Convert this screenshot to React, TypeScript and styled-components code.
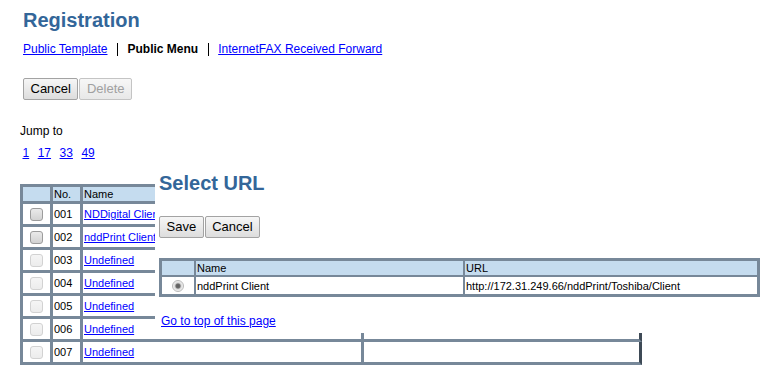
import * as React from 'react';
import styled, { createGlobalStyle } from 'styled-components';

const GlobalStyle = createGlobalStyle`
  html, body {
    margin: 0;
    padding: 0;
    background: #ffffff;
    font-family: "Liberation Sans", Arial, sans-serif;
    font-size: 12px;
    color: #000000;
  }
`;

const Page = styled.div`
  position: relative;
  width: 761px;
  height: 365px;
  overflow: hidden;
  padding: 8px 0 0 20px;
  box-sizing: border-box;
`;

const Title = styled.h1<{ $indent?: number }>`
  margin: 0 0 0 ${(p) => p.$indent ?? 0}px;
  font-size: 20px;
  line-height: 24px;
  font-weight: bold;
  color: #336699;
`;

const TabBar = styled.div`
  display: flex;
  align-items: center;
  margin: 10px 0 0 3px;
  line-height: 14px;
`;

const TabLink = styled.a`
  color: #0000ff;
  text-decoration: underline;
  cursor: pointer;
`;

const TabCurrent = styled.span`
  font-weight: bold;
`;

const TabSep = styled.span`
  display: inline-block;
  width: 0;
  height: 13px;
  border-left: 1px solid #000000;
  margin: 0 9.5px;
`;

const ButtonRow = styled.div<{ $top: number; $indent?: number }>`
  display: flex;
  gap: 1px;
  margin: ${(p) => p.$top}px 0 0 ${(p) => p.$indent ?? 0}px;
`;

const Button = styled.button`
  height: 22px;
  padding: 0 6.5px;
  font-family: "Liberation Sans", Arial, sans-serif;
  font-size: 13px;
  line-height: 20px;
  color: #000000;
  border: 1px solid #a3a3a3;
  border-radius: 2px;
  background: linear-gradient(#f6f6f6, #dddddd);

  &:disabled {
    color: #a0a0a0;
    border-color: #c4c4c4;
    background: linear-gradient(#f7f7f7, #e8e8e8);
  }
`;

const JumpLabel = styled.div`
  margin-top: 24px;
  line-height: 14px;
`;

const JumpLinks = styled.div`
  display: flex;
  gap: 8.5px;
  margin-top: 8px;
  padding-left: 2.5px;
  line-height: 14px;
`;

const Link = styled.a`
  color: #0000ff;
  text-decoration: underline;
  cursor: pointer;
  white-space: nowrap;
`;

const ListTable = styled.table`
  margin-top: 24px;
  border-spacing: 0;
  border-collapse: separate;
  table-layout: fixed;
  width: 622px;
  border-top: 3px solid #778899;
  border-left: 3px solid #778899;
  font-size: 11px;

  th, td {
    padding: 0 1px;
    border-right: 3px solid #778899;
    border-bottom: 3px solid #778899;
    text-align: left;
    vertical-align: middle;
    overflow: hidden;
    white-space: nowrap;
  }

  th {
    height: 14px;
    font-weight: normal;
    background: #c5dcef;
  }

  td {
    height: 20px;
  }

  th:last-child, td:last-child {
    border-right-color: #3e4a56;
  }
`;

const CheckCell = styled.td`
  && {
    text-align: center;
    padding: 0;
  }
`;

const CheckBox = styled.span<{ $enabled: boolean }>`
  display: inline-block;
  vertical-align: middle;
  width: 11px;
  height: 11px;
  border-radius: 3px;
  border: 1px solid ${(p) => (p.$enabled ? '#9c9c9c' : '#d2d2d2')};
  background: ${(p) =>
    p.$enabled ? 'linear-gradient(#eaeaea, #d2d2d2)' : 'linear-gradient(#f5f5f5, #ececec)'};
`;

const Dialog = styled.div`
  position: absolute;
  top: 160px;
  left: 155px;
  right: 0;
  height: 173px;
  background: #ffffff;
  padding: 11px 0 0 4px;
  box-sizing: border-box;
`;

const UrlTable = styled.table`
  margin-top: 20px;
  border-spacing: 0;
  border-collapse: separate;
  table-layout: fixed;
  width: 601px;
  border: 3px solid #778899;
  font-size: 11px;

  th, td {
    padding: 0 1px;
    text-align: left;
    vertical-align: middle;
    white-space: nowrap;
    overflow: hidden;
  }

  th + th, td + td {
    border-left: 2px solid #778899;
  }

  th {
    height: 14px;
    font-weight: normal;
    background: #c5dcef;
    border-bottom: 2px solid #778899;
  }

  td {
    height: 17px;
  }
`;

const RadioCell = styled.td`
  && {
    text-align: center;
  }
`;

const Radio = styled.span`
  display: inline-block;
  vertical-align: middle;
  width: 10px;
  height: 10px;
  border-radius: 50%;
  border: 1px solid #b8b8b8;
  background: radial-gradient(circle, #5e5e5e 0, #6a6a6a 2px, #d8d8d8 3.2px, #f2f2f2 5px);
`;

const TopLink = styled.div`
  margin: 17px 0 0 2px;
  line-height: 14px;
`;

const rows = [
  { no: '001', name: 'NDDigital Client', enabled: true },
  { no: '002', name: 'nddPrint Client', enabled: true },
  { no: '003', name: 'Undefined', enabled: false },
  { no: '004', name: 'Undefined', enabled: false },
  { no: '005', name: 'Undefined', enabled: false },
  { no: '006', name: 'Undefined', enabled: false },
  { no: '007', name: 'Undefined', enabled: false },
];

const App = () => (
  <>
    <GlobalStyle />
    <Page>
      <Title $indent={3}>Registration</Title>
      <TabBar>
        <TabLink>Public Template</TabLink>
        <TabSep />
        <TabCurrent>Public Menu</TabCurrent>
        <TabSep />
        <TabLink>InternetFAX Received Forward</TabLink>
      </TabBar>
      <ButtonRow $top={22} $indent={3}>
        <Button>Cancel</Button>
        <Button disabled>Delete</Button>
      </ButtonRow>
      <JumpLabel>Jump to</JumpLabel>
      <JumpLinks>
        <Link>1</Link>
        <Link>17</Link>
        <Link>33</Link>
        <Link>49</Link>
      </JumpLinks>
      <ListTable>
        <colgroup>
          <col style={{ width: 30 }} />
          <col style={{ width: 30 }} />
          <col style={{ width: 281 }} />
          <col />
        </colgroup>
        <thead>
          <tr>
            <th></th>
            <th>No.</th>
            <th>Name</th>
            <th></th>
          </tr>
        </thead>
        <tbody>
          {rows.map((r) => (
            <tr key={r.no}>
              <CheckCell>
                <CheckBox $enabled={r.enabled} />
              </CheckCell>
              <td>{r.no}</td>
              <td>
                <Link>{r.name}</Link>
              </td>
              <td></td>
            </tr>
          ))}
        </tbody>
      </ListTable>

      <Dialog>
        <Title>Select URL</Title>
        <ButtonRow $top={21}>
          <Button>Save</Button>
          <Button>Cancel</Button>
        </ButtonRow>
        <UrlTable>
          <colgroup>
            <col style={{ width: 32 }} />
            <col style={{ width: 269 }} />
            <col />
          </colgroup>
          <thead>
            <tr>
              <th></th>
              <th>Name</th>
              <th>URL</th>
            </tr>
          </thead>
          <tbody>
            <tr>
              <RadioCell>
                <Radio />
              </RadioCell>
              <td>nddPrint Client</td>
              <td>http://172.31.249.66/nddPrint/Toshiba/Client</td>
            </tr>
          </tbody>
        </UrlTable>
        <TopLink>
          <Link>Go to top of this page</Link>
        </TopLink>
      </Dialog>
    </Page>
  </>
);

export default App;
